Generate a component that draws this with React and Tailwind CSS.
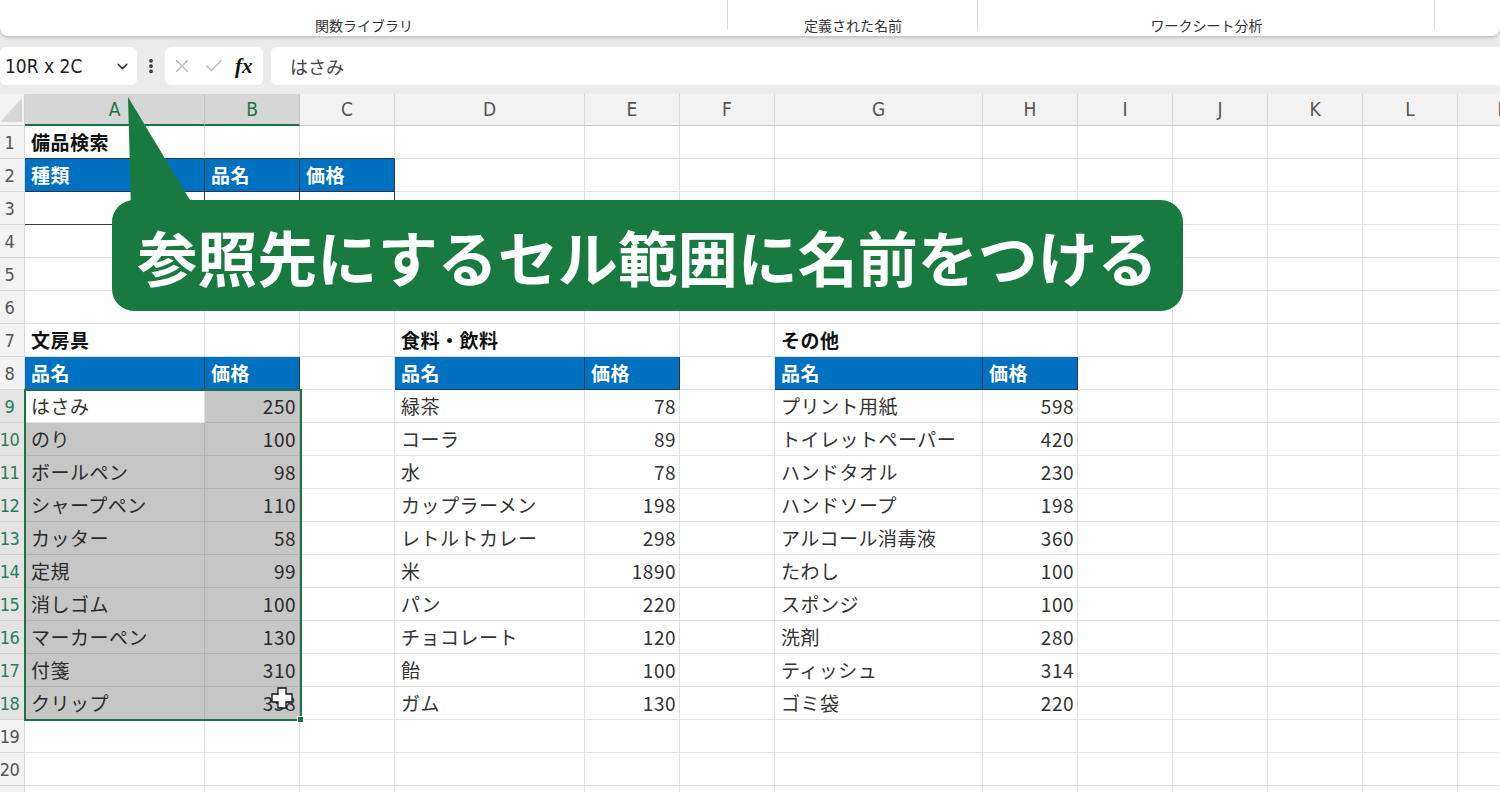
import React from 'react';
import { ChevronDown, EllipsisVertical, X, Check } from 'lucide-react';

const COLS = [
  { k: 'A', w: 'w-[180px]' },
  { k: 'B', w: 'w-[95px]' },
  { k: 'C', w: 'w-[95px]' },
  { k: 'D', w: 'w-[190px]' },
  { k: 'E', w: 'w-[95px]' },
  { k: 'F', w: 'w-[95px]' },
  { k: 'G', w: 'w-[208px]' },
  { k: 'H', w: 'w-[95px]' },
  { k: 'I', w: 'w-[95px]' },
  { k: 'J', w: 'w-[95px]' },
  { k: 'K', w: 'w-[95px]' },
  { k: 'L', w: 'w-[95px]' },
  { k: 'M', w: 'w-[95px]' },
];

const stationery = [
  ['はさみ', 250], ['のり', 100], ['ボールペン', 98], ['シャープペン', 110], ['カッター', 58],
  ['定規', 99], ['消しゴム', 100], ['マーカーペン', 130], ['付箋', 310], ['クリップ', 358],
];
const food = [
  ['緑茶', 78], ['コーラ', 89], ['水', 78], ['カップラーメン', 198], ['レトルトカレー', 298],
  ['米', 1890], ['パン', 220], ['チョコレート', 120], ['飴', 100], ['ガム', 130],
];
const other = [
  ['プリント用紙', 598], ['トイレットペーパー', 420], ['ハンドタオル', 230], ['ハンドソープ', 198],
  ['アルコール消毒液', 360], ['たわし', 100], ['スポンジ', 100], ['洗剤', 280], ['ティッシュ', 314], ['ゴミ袋', 220],
];

// build the sheet contents
const cells = {
  A1: { t: '備品検索', type: 'title', edge: true },
  B1: { edge: true },
  C1: { edge: true },
  A2: { t: '種類', type: 'head' },
  B2: { t: '品名', type: 'head' },
  C2: { t: '価格', type: 'head' },
  A3: { type: 'box' },
  B3: { type: 'box' },
  C3: { type: 'box' },
  A7: { t: '文房具', type: 'title' },
  D7: { t: '食料・飲料', type: 'title' },
  G7: { t: 'その他', type: 'title' },
  A8: { t: '品名', type: 'head' },
  B8: { t: '価格', type: 'head' },
  D8: { t: '品名', type: 'head' },
  E8: { t: '価格', type: 'head' },
  G8: { t: '品名', type: 'head' },
  H8: { t: '価格', type: 'head' },
};
[[stationery, 'A', 'B'], [food, 'D', 'E'], [other, 'G', 'H']].forEach(([list, a, b]) => {
  list.forEach(([name, price], i) => {
    const r = 9 + i;
    const inSel = a === 'A';
    cells[a + r] = { t: name, type: 'text', sel: inSel && r !== 9 };
    cells[b + r] = { t: String(price), type: 'num', sel: inSel };
  });
});

const ROWS = Array.from({ length: 21 }, (_, i) => i + 1);
const narrow = "font-['Liberation_Sans_Narrow','DejaVu_Sans_Condensed','Liberation_Sans',sans-serif]";

function Cell({ col, row }) {
  const c = cells[col.k + row] || {};
  let cls;
  if (c.type === 'head') cls = 'bg-[#0070c0] text-white font-bold border-[#22384f]';
  else if (c.type === 'box') cls = 'bg-white border-[#3a3a3a]';
  else if (c.sel) cls = 'bg-[#c6c6c6] border-[#b3b3b3] text-[#2a2a2a]';
  else if (c.type === 'title') cls = 'font-bold text-[#111] border-[#e1e1e1]';
  else cls = 'text-[#333] border-[#e1e1e1]';
  if (c.edge) cls += ' border-b-[#22384f]';
  const align = c.type === 'num' ? 'justify-end pr-[3px]' : 'pl-[6px]';
  return (
    <div className={`${col.w} shrink-0 h-full flex items-center whitespace-nowrap border-r border-b text-[19px] tracking-[0.5px] ${align} ${cls}`}>
      {c.t}
    </div>
  );
}

function Ribbon() {
  const groups = [
    { label: '関数ライブラリ', w: 'w-[728px]' },
    { label: '定義された名前', w: 'w-[250px]' },
    { label: 'ワークシート分析', w: 'w-[457px]' },
    { label: '', w: 'flex-1' },
  ];
  return (
    <div className="h-[36px] bg-white rounded-b-[8px] shadow-[0_2px_3px_rgba(0,0,0,0.18)] flex">
      {groups.map((g, i) => (
        <div key={i} className={`${g.w} relative flex items-end justify-center pb-[4px]`}>
          <span className="text-[14px] text-[#333] leading-none">{g.label}</span>
          {i < 3 && <div className="absolute right-0 top-0 h-[30px] w-px bg-[#dcdcdc]" />}
        </div>
      ))}
    </div>
  );
}

function FormulaBar() {
  return (
    <div className={`flex items-stretch h-[38px] mt-[11px] ${narrow}`}>
      <div className="w-[137px] bg-white rounded-[6px] flex items-center justify-between pl-[5px] pr-[6px]">
        <span className="text-[19px] text-[#222]">10R x 2C</span>
        <ChevronDown size={17} strokeWidth={2} className="text-[#333]" />
      </div>
      <div className="w-[28px] flex items-center justify-center">
        <EllipsisVertical size={18} strokeWidth={3} className="text-[#333]" />
      </div>
      <div className="w-[98px] bg-white rounded-[6px] flex items-center gap-[10px] pl-[6px]">
        <X size={22} strokeWidth={1.3} className="text-[#b5b5b5]" />
        <Check size={22} strokeWidth={1.3} className="text-[#b5b5b5]" />
        <span className="font-['Liberation_Serif',serif] italic font-bold text-[21px] text-[#111] leading-none">fx</span>
      </div>
      <div className="flex-1 ml-[8px] bg-white rounded-l-[6px] flex items-center pl-[19px]">
        <span className="text-[18px] text-[#444] font-['Noto_Sans_CJK_JP',sans-serif]">はさみ</span>
      </div>
    </div>
  );
}

function Sheet() {
  return (
    <div className="mt-[9px] bg-white">
      <div className={`flex h-[32px] bg-[#f3f3f3] ${narrow}`}>
        <div className="w-[25px] shrink-0 border-b border-r border-[#d0d0d0] relative">
          <svg className="absolute left-0 top-0" width="25" height="32" viewBox="0 0 25 32">
            <polygon points="22,4 22,28 0,28" fill="#d6d6d6" />
          </svg>
        </div>
        {COLS.map((c) => {
          const on = c.k === 'A' || c.k === 'B';
          return (
            <div
              key={c.k}
              className={`${c.w} shrink-0 flex items-center justify-center text-[19px] border-r ${
                on
                  ? 'bg-[#d6d6d6] text-[#1e7145] border-[#c4c4c4] border-b-2 border-b-[#1e7145]'
                  : 'text-[#555] border-[#d9d9d9] border-b border-b-[#c8c8c8]'
              }`}
            >
              {c.k}
            </div>
          );
        })}
      </div>
      {ROWS.map((r) => {
        const on = r >= 9 && r <= 18;
        return (
          <div key={r} className="flex h-[33px]">
            <div
              className={`w-[25px] shrink-0 flex items-center justify-center pr-[5px] border-b border-r text-[18px] tracking-[-0.5px] ${narrow} ${
                on ? 'bg-[#e4e4e4] text-[#2a7c5a] border-[#d0d0d0]' : 'bg-[#f3f3f3] text-[#555] border-[#d9d9d9]'
              }`}
            >
              {r}
            </div>
            {COLS.map((c) => (
              <Cell key={c.k} col={c} row={r} />
            ))}
          </div>
        );
      })}
    </div>
  );
}

export default function App() {
  return (
    <div className="relative w-[1500px] h-[792px] overflow-hidden bg-[#ececec] font-['Noto_Sans_CJK_JP',sans-serif]">
      <Ribbon />
      <FormulaBar />
      <Sheet />

      {/* selection outline A9:B18 */}
      <div className="absolute left-[24px] top-[389px] w-[278px] h-[332px] border-2 border-[#1e7145]" />
      <div className="absolute left-[297px] top-[716px] w-[7px] h-[7px] bg-[#1e7145] border border-white" />

      {/* mouse cursor */}
      <svg className="absolute left-[270px] top-[686px]" width="24" height="24" viewBox="0 0 24 24">
        <path d="M8 2h8v6h6v8h-6v6H8v-6H2V8h6z" fill="white" stroke="#111" strokeWidth="1.3" />
      </svg>

      {/* callout */}
      <svg className="absolute left-[126px] top-[96px]" width="72" height="114" viewBox="0 0 72 114">
        <polygon points="2,1 5,114 70,114" fill="#187a3f" />
      </svg>
      <div className="absolute left-[112px] top-[200px] w-[1071px] h-[111px] rounded-[22px] bg-[#187a3f] flex items-center justify-center">
        <span className="text-white font-bold text-[60px] leading-none">参照先にするセル範囲に名前をつける</span>
      </div>
    </div>
  );
}
